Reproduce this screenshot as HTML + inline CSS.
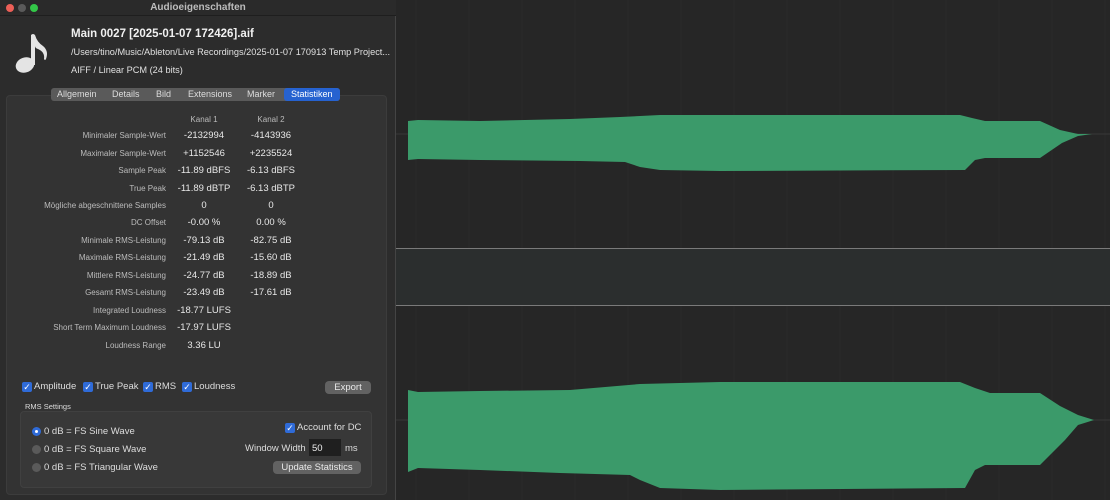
<!DOCTYPE html>
<html><head><meta charset="utf-8"><style>
*{margin:0;padding:0;box-sizing:border-box}
body{width:1110px;height:500px;background:#262626;font-family:"Liberation Sans",sans-serif;position:relative;overflow:hidden;color:#ddd}
.a{position:absolute;white-space:nowrap}
#win{position:absolute;left:0;top:0;width:396px;height:500px;background:#2c2c2c;border-right:1px solid #444}
.lab{position:absolute;right:229px;font-size:8px;color:#bcbcbc;text-align:right}
.v{position:absolute;font-size:9.5px;color:#e8e8e8;text-align:center;width:80px}
.cb{position:absolute;width:10px;height:10px;background:#2f6bd8;border-radius:2px;color:#fff;font-size:9px;line-height:10px;text-align:center}
.t{font-size:9.5px;color:#ddd}
.rad{position:absolute;width:9px;height:9px;border-radius:50%;background:#5a5a5a}
.btn{position:absolute;background:#626262;border-radius:4px;color:#e8e8e8;font-size:9.5px;text-align:center}
</style></head><body>
<svg class="a" style="left:396px;top:0" width="714" height="500">
<g stroke="#2a2a2a" stroke-width="1">
<line x1="20" y1="0" x2="20" y2="500"/><line x1="73" y1="0" x2="73" y2="500"/><line x1="126" y1="0" x2="126" y2="500"/><line x1="179" y1="0" x2="179" y2="500"/><line x1="232" y1="0" x2="232" y2="500"/><line x1="285" y1="0" x2="285" y2="500"/><line x1="338" y1="0" x2="338" y2="500"/><line x1="391" y1="0" x2="391" y2="500"/><line x1="444" y1="0" x2="444" y2="500"/><line x1="497" y1="0" x2="497" y2="500"/><line x1="550" y1="0" x2="550" y2="500"/><line x1="603" y1="0" x2="603" y2="500"/><line x1="656" y1="0" x2="656" y2="500"/><line x1="709" y1="0" x2="709" y2="500"/>
</g>
<rect x="0" y="248" width="714" height="57" fill="#2b2e2e"/>
<line x1="0" y1="248.5" x2="714" y2="248.5" stroke="#7a7a7a"/>
<line x1="0" y1="305.5" x2="714" y2="305.5" stroke="#7a7a7a"/>
<line x1="0" y1="134" x2="714" y2="134" stroke="#383838"/>
<line x1="0" y1="420" x2="714" y2="420" stroke="#383838"/>
<g transform="translate(-396,0)" fill="#3b9a6a">
<polygon points="408,121 418,120 480,121 570,119 620,117 660,115 720,115 960,115 972,118 985,121 1040,121 1060,130 1078,134 1092,134 1078,136 1062,143 1040,158 985,158 975,160 965,170 720,171 660,170 640,167 625,162 580,161 480,160 418,159 408,160"/>
<polygon points="408,390 418,392 480,391 570,390 640,384 720,382 960,382 975,388 990,393 1040,393 1060,406 1078,415 1094,420 1078,425 1065,440 1040,465 985,465 975,470 965,488 720,490 660,488 640,480 630,475 560,473 480,470 418,468 408,472"/>
</g>
</svg>
<div id="win">
<div class="a" style="left:0;top:0;width:396px;height:16px;background:#2a2a2a;border-bottom:1px solid #1e1e1e"></div>
<div class="a" style="left:6px;top:4px;width:8px;height:8px;border-radius:50%;background:#ec5f57"></div>
<div class="a" style="left:18px;top:4px;width:8px;height:8px;border-radius:50%;background:#5a5a5a"></div>
<div class="a" style="left:30px;top:4px;width:8px;height:8px;border-radius:50%;background:#33c748"></div>
<div class="a" style="left:0;width:396px;top:2px;text-align:center;font-size:10px;color:#bdbdbd;font-weight:bold">Audioeigenschaften</div>
<svg class="a" style="left:14px;top:32px" width="36" height="42" viewBox="0 0 36 42">
<ellipse cx="11" cy="33" rx="9.5" ry="7.5" transform="rotate(-20 11 33)" fill="#e4e4e4"/>
<path d="M17 33 L17 3 Q19 1 21 3 Q23 10 29 14 Q35 19 32 27 Q31 29 30 27 Q31 20 24 17 Q21 16 21 14 L21 33 Z" fill="#e4e4e4"/>
</svg>
<div class="a" style="left:71px;top:28px;font-size:11.5px;font-weight:bold;color:#f0f0f0">Main 0027 [2025-01-07 172426].aif</div>
<div class="a" style="left:71px;top:47px;font-size:9.2px;color:#e0e0e0">/Users/tino/Music/Ableton/Live Recordings/2025-01-07 170913 Temp Project...</div>
<div class="a" style="left:71px;top:65px;font-size:9.2px;color:#e0e0e0">AIFF / Linear PCM (24 bits)</div>
<div class="a" style="left:6px;top:95px;width:381px;height:400px;background:#333;border:1px solid #3c3c3c;border-radius:4px"></div>
<div class="a" style="left:51px;top:88px;width:289px;height:13px;background:#5a5a5a;border-radius:3px"></div>
<div class="a" style="left:284px;top:88px;width:56px;height:13px;background:#2662d0;border-radius:3px"></div>
<div class="a" style="top:89px;left:57px;font-size:9px;color:#ddd">Allgemein</div>
<div class="a" style="top:89px;left:112px;font-size:9px;color:#ddd">Details</div>
<div class="a" style="top:89px;left:156px;font-size:9px;color:#ddd">Bild</div>
<div class="a" style="top:89px;left:188px;font-size:9px;color:#ddd">Extensions</div>
<div class="a" style="top:89px;left:247px;font-size:9px;color:#ddd">Marker</div>
<div class="a" style="top:89px;left:291px;font-size:9px;color:#fff">Statistiken</div>
<div class="v" style="left:164px;top:115px;font-size:8px;color:#bbb">Kanal 1</div>
<div class="v" style="left:231px;top:115px;font-size:8px;color:#bbb">Kanal 2</div>
<div class="lab" style="top:131px">Minimaler Sample-Wert</div><div class="v" style="left:164px;top:130px">-2132994</div><div class="v" style="left:231px;top:130px">-4143936</div>
<div class="lab" style="top:149px">Maximaler Sample-Wert</div><div class="v" style="left:164px;top:148px">+1152546</div><div class="v" style="left:231px;top:148px">+2235524</div>
<div class="lab" style="top:166px">Sample Peak</div><div class="v" style="left:164px;top:165px">-11.89 dBFS</div><div class="v" style="left:231px;top:165px">-6.13 dBFS</div>
<div class="lab" style="top:184px">True Peak</div><div class="v" style="left:164px;top:183px">-11.89 dBTP</div><div class="v" style="left:231px;top:183px">-6.13 dBTP</div>
<div class="lab" style="top:201px">Mögliche abgeschnittene Samples</div><div class="v" style="left:164px;top:200px">0</div><div class="v" style="left:231px;top:200px">0</div>
<div class="lab" style="top:218px">DC Offset</div><div class="v" style="left:164px;top:217px">-0.00 %</div><div class="v" style="left:231px;top:217px">0.00 %</div>
<div class="lab" style="top:236px">Minimale RMS-Leistung</div><div class="v" style="left:164px;top:235px">-79.13 dB</div><div class="v" style="left:231px;top:235px">-82.75 dB</div>
<div class="lab" style="top:253px">Maximale RMS-Leistung</div><div class="v" style="left:164px;top:252px">-21.49 dB</div><div class="v" style="left:231px;top:252px">-15.60 dB</div>
<div class="lab" style="top:271px">Mittlere RMS-Leistung</div><div class="v" style="left:164px;top:270px">-24.77 dB</div><div class="v" style="left:231px;top:270px">-18.89 dB</div>
<div class="lab" style="top:288px">Gesamt RMS-Leistung</div><div class="v" style="left:164px;top:287px">-23.49 dB</div><div class="v" style="left:231px;top:287px">-17.61 dB</div>
<div class="lab" style="top:306px">Integrated Loudness</div><div class="v" style="left:164px;top:305px">-18.77 LUFS</div>
<div class="lab" style="top:323px">Short Term Maximum Loudness</div><div class="v" style="left:164px;top:322px">-17.97 LUFS</div>
<div class="lab" style="top:341px">Loudness Range</div><div class="v" style="left:164px;top:340px">3.36 LU</div>
<div class="cb" style="left:22px;top:382px">✓</div><div class="a t" style="left:34px;top:381px">Amplitude</div>
<div class="cb" style="left:83px;top:382px">✓</div><div class="a t" style="left:95px;top:381px">True Peak</div>
<div class="cb" style="left:143px;top:382px">✓</div><div class="a t" style="left:155px;top:381px">RMS</div>
<div class="cb" style="left:182px;top:382px">✓</div><div class="a t" style="left:194px;top:381px">Loudness</div>
<div class="btn" style="left:325px;top:381px;width:46px;height:13px;line-height:13px">Export</div>
<div class="a" style="left:25px;top:402px;font-size:7.5px;color:#ddd">RMS Settings</div>
<div class="a" style="left:20px;top:411px;width:352px;height:77px;background:#383838;border:1px solid #404040;border-radius:4px"></div>
<div class="rad" style="left:32px;top:427px;background:#2f6bd8"></div><div class="a" style="left:35px;top:430px;width:3px;height:3px;border-radius:50%;background:#fff"></div>
<div class="a t" style="left:44px;top:426px">0 dB = FS Sine Wave</div>
<div class="rad" style="left:32px;top:445px"></div><div class="a t" style="left:44px;top:444px">0 dB = FS Square Wave</div>
<div class="rad" style="left:32px;top:463px"></div><div class="a t" style="left:44px;top:462px">0 dB = FS Triangular Wave</div>
<div class="cb" style="left:285px;top:423px">✓</div><div class="a t" style="left:297px;top:422px">Account for DC</div>
<div class="a t" style="left:245px;top:443px">Window Width</div>
<div class="a" style="left:309px;top:439px;width:32px;height:17px;background:#1f1f1f"></div>
<div class="a t" style="left:312px;top:443px;color:#eee">50</div>
<div class="a t" style="left:345px;top:443px">ms</div>
<div class="btn" style="left:273px;top:461px;width:88px;height:13px;line-height:13px">Update Statistics</div>
</div>
</body></html>
